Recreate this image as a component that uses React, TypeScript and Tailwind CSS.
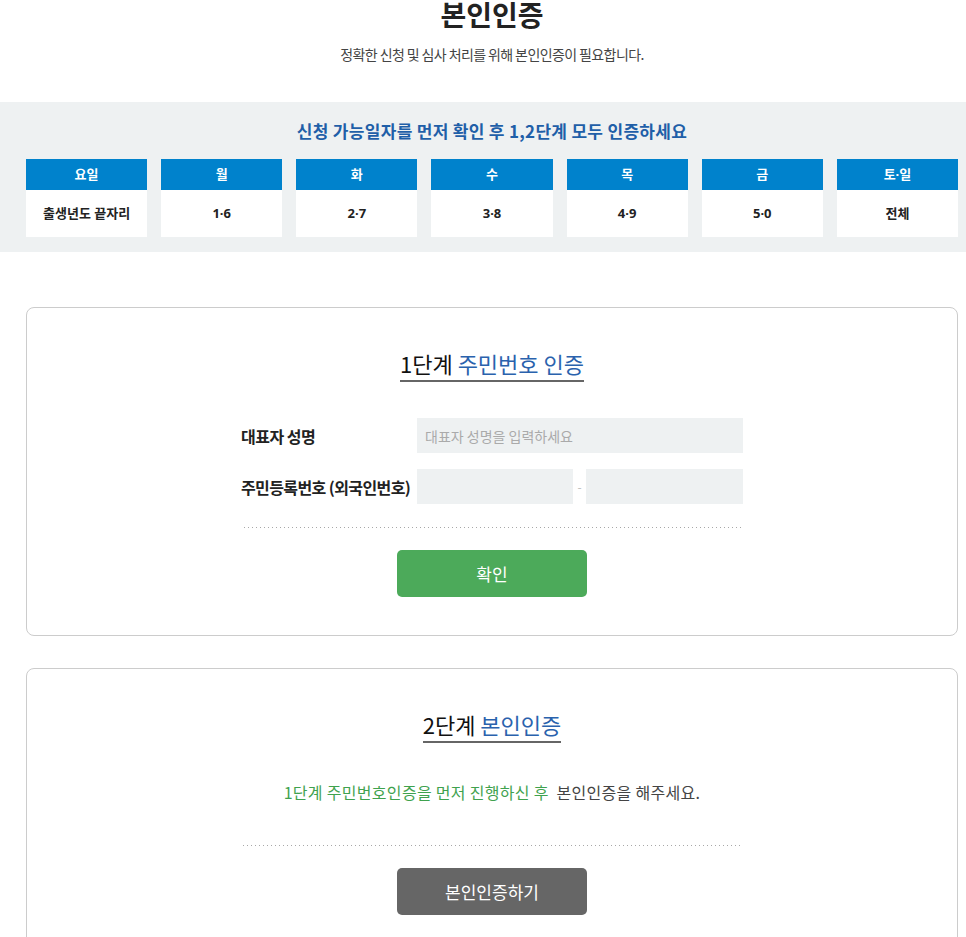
import React from 'react'

const days = [
  { head: '요일', body: '출생년도 끝자리' },
  { head: '월', body: '1·6' },
  { head: '화', body: '2·7' },
  { head: '수', body: '3·8' },
  { head: '목', body: '4·9' },
  { head: '금', body: '5·0' },
  { head: '토·일', body: '전체' },
]

const latinFirst = { fontFamily: '"Noto Sans", "Noto Sans CJK KR", sans-serif' }

function StepTitle({ num, label }: { num: string; label: string }) {
  return (
    <div className="flex justify-center">
      <h3 className="text-[22px] leading-[30px] pb-[2px] border-b-2 border-[#666] text-[#111]">
        {num}단계 <span className="text-[#2a62ad]">{label}</span>
      </h3>
    </div>
  )
}

function Dotted({ className }: { className: string }) {
  return (
    <div
      className={`h-px bg-[linear-gradient(to_right,#a8a8a8_1px,transparent_1px)] bg-[length:4px_1px] ${className}`}
    />
  )
}

export default function App() {
  return (
    <div
      className="w-[966px] bg-white text-[#222]"
      style={{ fontFamily: '"Noto Sans CJK KR", "Noto Sans", sans-serif' }}
    >
      <div className="ml-[26px] w-[932px] pt-[1px] pb-[38px] text-center">
        <h1 className="text-[28px] font-bold leading-[30px] -mt-[2px] text-[#222]">본인인증</h1>
        <p className="mt-[15px] text-[14px] leading-[20px] tracking-[-0.6px] text-[#444]">
          정확한 신청 및 심사 처리를 위해 본인인증이 필요합니다.
        </p>
      </div>

      <div className="bg-[#eef1f2] pt-[17px] pb-[15px]">
        <p className="ml-[26px] w-[932px] text-center text-[17px] font-bold leading-[24px] tracking-[0.3px] text-[#1f5fa8]">
          신청 가능일자를 먼저 확인 후 1,2단계 모두 인증하세요
        </p>
        <div className="ml-[26px] w-[932px] mt-[16px] grid grid-cols-7 gap-[14px]">
          {days.map((d) => (
            <div key={d.head} className="bg-white">
              <div
                className="h-[31px] bg-[#0082cc] text-white text-[13px] font-bold flex items-center justify-center"
                style={latinFirst}
              >
                {d.head}
              </div>
              <div
                className="h-[47px] flex items-center justify-center text-[13px] font-bold text-[#222]"
                style={latinFirst}
              >
                {d.body}
              </div>
            </div>
          ))}
        </div>
      </div>

      <div className="ml-[26px] w-[932px] pt-[55px] flex flex-col gap-[32px]">
        <section className="border border-[#ccc] rounded-[8px] pt-[40px] pb-[38px]">
          <StepTitle num="1" label="주민번호 인증" />
          <div className="w-[502px] mx-auto mt-[36px]">
            <div className="flex items-center h-[35px]">
              <label className="w-[176px] text-[16px] font-bold tracking-[-0.5px]">대표자 성명</label>
              <input
                className="w-[326px] h-[35px] bg-[#eef1f2] px-[8px] text-[14px] outline-none placeholder:text-[#aaa]"
                placeholder="대표자 성명을 입력하세요"
              />
            </div>
            <div className="flex items-center h-[35px] mt-[16px]">
              <label className="w-[176px] text-[16px] font-bold tracking-[-0.6px]">주민등록번호 (외국인번호)</label>
              <input className="w-[156px] h-[35px] bg-[#eef1f2] outline-none" />
              <span className="w-[13px] text-center text-[12px] text-[#bbb]">-</span>
              <input className="w-[157px] h-[35px] bg-[#eef1f2] outline-none" />
            </div>
            <Dotted className="mt-[23px] ml-[3px]" />
            <div className="flex justify-center mt-[22px]">
              <button className="w-[190px] h-[47px] rounded-[5px] bg-[#4caa5a] text-white text-[17px]">
                확인
              </button>
            </div>
          </div>
        </section>

        <section className="border border-[#ccc] rounded-[8px] pt-[40px] pb-[40px]">
          <StepTitle num="2" label="본인인증" />
          <p className="mt-[37px] text-center text-[16px] leading-[24px] tracking-[0.3px] text-[#444]">
            <span className="text-[#3fa24e]">1단계 주민번호인증을 먼저 진행하신 후</span>&nbsp; 본인인증을 해주세요.
          </p>
          <Dotted className="w-[498px] mx-auto mt-[41px]" />
          <div className="flex justify-center mt-[22px]">
            <button className="w-[190px] h-[47px] rounded-[5px] bg-[#666] text-white text-[17px]">
              본인인증하기
            </button>
          </div>
        </section>
      </div>
    </div>
  )
}
